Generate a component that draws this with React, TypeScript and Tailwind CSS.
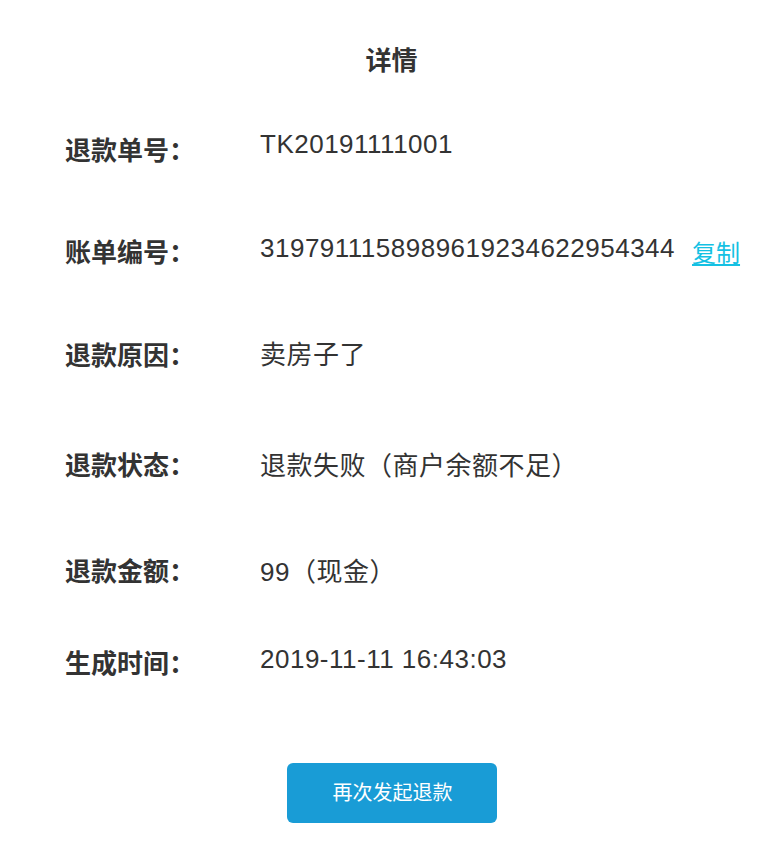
const font = "font-['Liberation_Sans','Noto_Sans_CJK_SC',sans-serif]";

interface Row {
  label: string;
  value: string;
  top: string;
  shift: string;
  copy?: boolean;
}

const rows: Row[] = [
  { label: "退款单号：", value: "TK20191111001", top: "mt-[48px]", shift: "mt-[7px]" },
  { label: "账单编号：", value: "3197911158989619234622954344", top: "mt-[67px]", shift: "mt-[5px]", copy: true },
  { label: "退款原因：", value: "卖房子了", top: "mt-[72px]", shift: "mt-[1px]" },
  { label: "退款状态：", value: "退款失败（商户余额不足）", top: "mt-[80px]", shift: "mt-0" },
  { label: "退款金额：", value: "99（现金）", top: "mt-[76px]", shift: "mt-0" },
  { label: "生成时间：", value: "2019-11-11 16:43:03", top: "mt-[57px]", shift: "mt-[5px]" },
];

export default function App() {
  return (
    <div className={`w-[783px] h-[853px] bg-white text-[#333333] ${font}`}>
      <div className="pt-[41px] text-center text-[26px] leading-[40px] font-bold">详情</div>

      {rows.map((row) => (
        <div key={row.label} className={`flex items-start pl-[65px] ${row.top}`}>
          <div className={`w-[195px] shrink-0 text-[26px] leading-[30px] font-bold ${row.shift}`}>
            {row.label}
          </div>
          <div className="flex items-end text-[26px] leading-[30px] tracking-[0.5px] whitespace-nowrap">
            <span>{row.value}</span>
            {row.copy && (
              <span className="ml-[17px] mb-[-6px] text-[24px] tracking-normal text-[#14c1e3] underline underline-offset-2">
                复制
              </span>
            )}
          </div>
        </div>
      ))}

      <div className="flex justify-center mt-[84px]">
        <button className="w-[210px] h-[60px] rounded-[6px] bg-[#199cd6] text-white text-[20px] pl-[2px]">
          再次发起退款
        </button>
      </div>
    </div>
  );
}
